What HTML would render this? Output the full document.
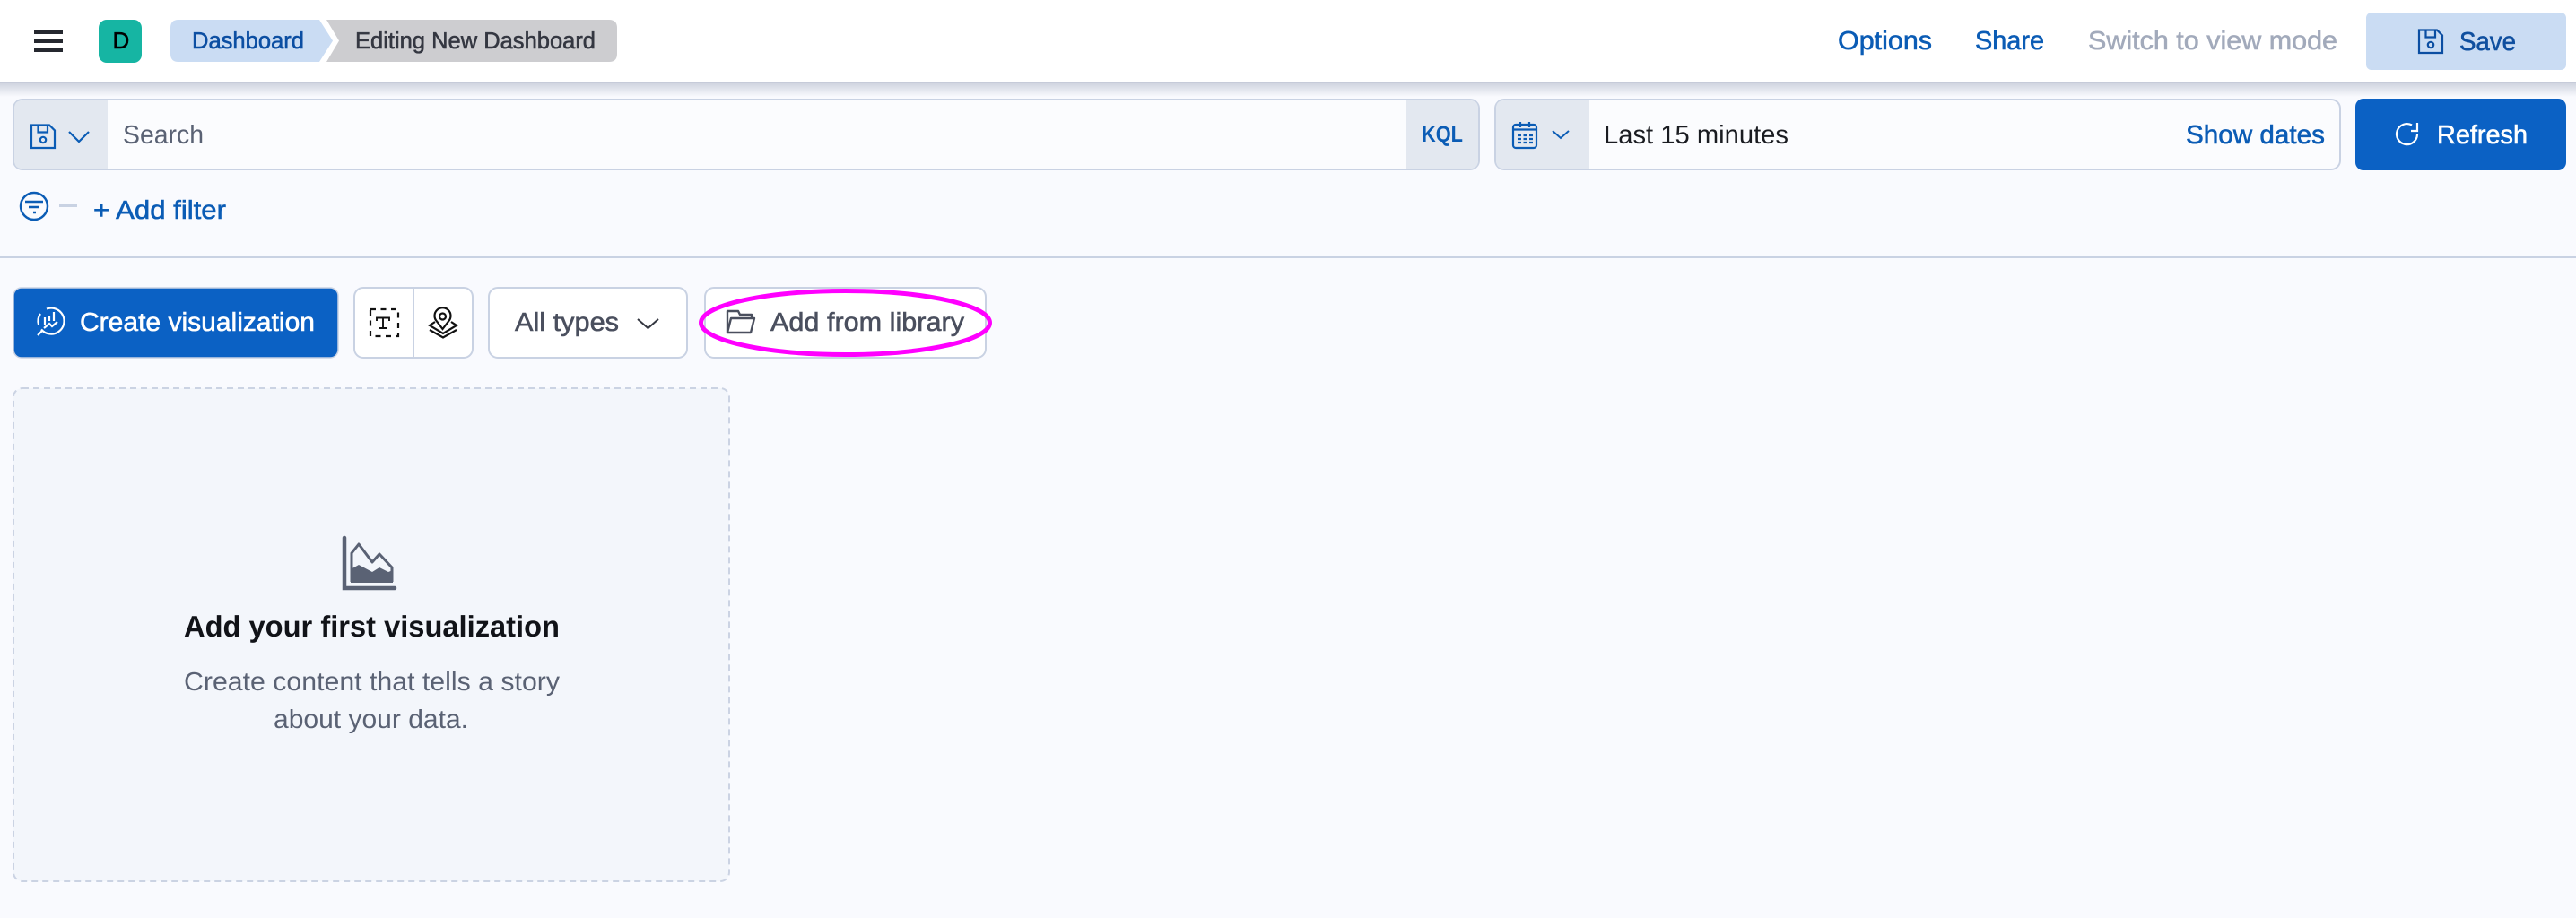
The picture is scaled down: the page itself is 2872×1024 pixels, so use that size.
<!DOCTYPE html>
<html lang="en">
<head>
<meta charset="utf-8">
<title>Editing New Dashboard</title>
<style>
html,body{margin:0;padding:0;background:#f9fafe;width:2872px;height:1024px;overflow:hidden}
svg{display:block;position:absolute;left:0;top:0}
text{font-family:"Liberation Sans",sans-serif;text-rendering:geometricPrecision}
.m{stroke-width:.55px;paint-order:stroke}
</style>
</head>
<body>
<svg width="2872" height="1024" viewBox="0 0 2872 1024" xmlns="http://www.w3.org/2000/svg">
<defs>
<linearGradient id="sh" x1="0" y1="0" x2="0" y2="1">
<stop offset="0" stop-color="#aab2c4" stop-opacity=".55"/>
<stop offset="1" stop-color="#aab2c4" stop-opacity="0"/>
</linearGradient>
</defs>
<rect width="2872" height="1024" fill="#f9fafe"/>

<!-- header -->
<rect x="0" y="0" width="2872" height="92" fill="#fff"/>
<rect x="0" y="92" width="2872" height="16" fill="url(#sh)"/>
<rect x="0" y="91" width="2872" height="2" fill="#c6cbd9"/>

<!-- hamburger -->
<rect x="38" y="34" width="32" height="4" fill="#25282f"/>
<rect x="38" y="44" width="32" height="4" fill="#25282f"/>
<rect x="38" y="54" width="32" height="4" fill="#25282f"/>

<!-- avatar -->
<rect x="110" y="22" width="48" height="48" rx="9" fill="#16b5a3"/>
<text x="125.500" y="54" font-size="26" fill="#000" stroke="#000" class="m">D</text>

<!-- breadcrumbs -->
<path d="M199 22H356L371 45.500L356 69H199Q190 69 190 60V31Q190 22 199 22Z" fill="#cadcf3"/>
<path d="M364 22H679Q688 22 688 31V60Q688 69 679 69H364L378 45.500Z" fill="#cdcdd0"/>
<text x="214" y="54" font-size="26" fill="#0b4ea2" stroke="#0b4ea2" class="m" textLength="125" lengthAdjust="spacingAndGlyphs">Dashboard</text>
<text x="396" y="54" font-size="26" fill="#343741" stroke="#343741" class="m" textLength="268" lengthAdjust="spacingAndGlyphs">Editing New Dashboard</text>

<!-- header actions -->
<text x="2049" y="55" font-size="29" fill="#0b5cb5" stroke="#0b5cb5" class="m" textLength="105" lengthAdjust="spacingAndGlyphs">Options</text>
<text x="2202" y="55" font-size="29" fill="#0b5cb5" stroke="#0b5cb5" class="m" textLength="77" lengthAdjust="spacingAndGlyphs">Share</text>
<text x="2328" y="55" font-size="29" fill="#a2aabb" stroke="#a2aabb" class="m" textLength="278" lengthAdjust="spacingAndGlyphs">Switch to view mode</text>
<rect x="2638" y="14" width="223" height="64" rx="6" fill="#cadcf3"/>
<g fill="none" stroke="#0b4ea2" stroke-width="2.200" transform="translate(2662 -106)">
<path d="M35 139.500H55L61 145.500V165H35Z"/><path d="M42.500 139.500V147.500H53V139.500"/><circle cx="48" cy="156" r="3.200"/>
</g>
<text x="2742" y="56" font-size="29" fill="#0f4f9f" stroke="#0f4f9f" class="m" textLength="63" lengthAdjust="spacingAndGlyphs">Save</text>

<!-- search -->
<rect x="15" y="111" width="1634" height="78" rx="10" fill="#fbfcfe" stroke="#c9d2e3" stroke-width="2"/>
<path d="M120 112H25Q16 112 16 121V179Q16 188 25 188H120Z" fill="#e3e8f0"/>
<path d="M1568 112H1639Q1648 112 1648 121V179Q1648 188 1639 188H1568Z" fill="#e3e8f0"/>
<g fill="none" stroke="#0b5cb5" stroke-width="2.200">
<path d="M35 139.500H55L61 145.500V165H35Z"/><path d="M42.500 139.500V147.500H53V139.500"/><circle cx="48" cy="156" r="3.200"/>
<path d="M77 147L88 158L99 147"/>
</g>
<text x="137" y="160" font-size="29" fill="#5a6274" textLength="90" lengthAdjust="spacingAndGlyphs">Search</text>
<text x="1585" y="158" font-size="25" font-weight="bold" fill="#0b5cb5" textLength="46" lengthAdjust="spacingAndGlyphs">KQL</text>

<!-- date picker -->
<rect x="1667" y="111" width="942" height="78" rx="10" fill="#fbfcfe" stroke="#c9d2e3" stroke-width="2"/>
<path d="M1772 112H1677Q1668 112 1668 121V179Q1668 188 1677 188H1772Z" fill="#e3e8f0"/>
<g fill="none" stroke="#0b5cb5" stroke-width="2.200">
<rect x="1687" y="139" width="26" height="26" rx="3"/>
<path d="M1687 144.500H1713M1695 136V142M1705 136V142"/>
<path d="M1731 146L1740 154L1749 146" stroke-width="1.900"/>
<path d="M1692 151H1709M1692 155H1709M1692 159H1709" stroke-dasharray="4 2.500" stroke-width="2.200"/>
</g>
<text x="1788" y="160" font-size="29" fill="#1a1c21" textLength="206" lengthAdjust="spacingAndGlyphs">Last 15 minutes</text>
<text x="2437" y="160" font-size="29" fill="#0b5cb5" stroke="#0b5cb5" class="m" textLength="155" lengthAdjust="spacingAndGlyphs">Show dates</text>

<!-- refresh -->
<rect x="2626" y="110" width="235" height="80" rx="9" fill="#0b61c4"/>
<path d="M2689 139.500A11.500 11.500 0 1 0 2695 150M2695 137V146H2688" fill="none" stroke="#fff" stroke-width="2.200"/>
<text x="2717" y="160" font-size="29" fill="#fff" stroke="#fff" class="m" textLength="101" lengthAdjust="spacingAndGlyphs">Refresh</text>

<!-- filter row -->
<circle cx="38" cy="230" r="15" fill="none" stroke="#0b5cb5" stroke-width="2.500"/>
<path d="M28 225H48M32 231H44M37 237H40" stroke="#0b5cb5" stroke-width="2.400" fill="none"/>
<rect x="66" y="228" width="20" height="3" fill="#c9d2e3"/>
<text x="104" y="244" font-size="29" fill="#0b5cb5" stroke="#0b5cb5" class="m" textLength="148" lengthAdjust="spacingAndGlyphs">+ Add filter</text>

<rect x="0" y="286" width="2872" height="2" fill="#c9d2e3"/>

<!-- toolbar -->
<rect x="15" y="321" width="362" height="78" rx="9" fill="#0b61c4" stroke="#c9d2e3" stroke-width="1.500"/>
<g fill="none" stroke="#fff" stroke-width="2.200">
<path d="M52 344.500A14.500 14.500 0 1 1 46 367.500"/>
<path d="M43 362A14.500 14.500 0 0 1 45 350"/>
<path d="M42 374L47 369"/>
<path d="M50 354V362M55 352V358M60 348V358M49 366L55 361L58 364L64 359"/>
</g>
<text x="89" y="369" font-size="29" fill="#fff" stroke="#fff" class="m" textLength="262" lengthAdjust="spacingAndGlyphs">Create visualization</text>

<rect x="395" y="321" width="132" height="78" rx="10" fill="#fff" stroke="#c9d2e3" stroke-width="2"/>
<rect x="460" y="322" width="2" height="76" fill="#c9d2e3"/>
<g fill="none" stroke="#111" stroke-width="2.200">
<rect x="413" y="345" width="31" height="30" stroke-dasharray="6 5.500"/>
<path d="M420 358V354.500H434V358M427 354.500V366M423 366H431" stroke-width="1.900"/>
<path d="M493.500 367L487 358.500A9 9 0 1 1 500 358.500Z"/>
<circle cx="493.500" cy="353" r="3.500"/>
<path d="M485 359L479 363L494 372L509 363L503 359M479 368L494 376.500L509 368"/>
</g>

<rect x="545" y="321" width="221" height="78" rx="10" fill="#fff" stroke="#c9d2e3" stroke-width="2"/>
<text x="574" y="369" font-size="29" fill="#4a4f5e" stroke="#4a4f5e" class="m" textLength="116" lengthAdjust="spacingAndGlyphs">All types</text>
<path d="M711 356L722.500 366L734 356" fill="none" stroke="#343741" stroke-width="2"/>

<rect x="786" y="321" width="313" height="78" rx="10" fill="#fff" stroke="#c9d2e3" stroke-width="2"/>
<path d="M811 371V347H823L825 351H838V355M815 355H841L837 371H811Z" fill="none" stroke="#4a4f5e" stroke-width="2.400" stroke-linejoin="round"/>
<text x="859" y="369" font-size="29" fill="#4a4f5e" stroke="#4a4f5e" class="m" textLength="216" lengthAdjust="spacingAndGlyphs">Add from library</text>

<!-- highlight -->
<ellipse cx="942.500" cy="360" rx="161" ry="35.500" fill="none" stroke="#ff00ff" stroke-width="5"/>

<!-- card -->
<rect x="15" y="433" width="798" height="550" rx="10" fill="#f3f6fb" stroke="#cbd3e3" stroke-width="2" stroke-dasharray="7 5"/>
<path d="M384 600V656H440" fill="none" stroke="#5a6274" stroke-width="4.500" stroke-linecap="round"/>
<path d="M392 649V617L400 607L415 627L423 618L437 633V649" fill="none" stroke="#5a6274" stroke-width="3" stroke-linejoin="round"/>
<path d="M391 635L400 630L415 638L423 633L433 638L438 636V650H391Z" fill="#5a6274"/>
<text x="205" y="710" font-size="33" font-weight="bold" fill="#111318" textLength="419" lengthAdjust="spacingAndGlyphs">Add your first visualization</text>
<text x="205" y="770" font-size="29" fill="#5a6274" textLength="419" lengthAdjust="spacingAndGlyphs">Create content that tells a story</text>
<text x="305" y="812" font-size="29" fill="#5a6274" textLength="217" lengthAdjust="spacingAndGlyphs">about your data.</text>
</svg>
</body>
</html>
